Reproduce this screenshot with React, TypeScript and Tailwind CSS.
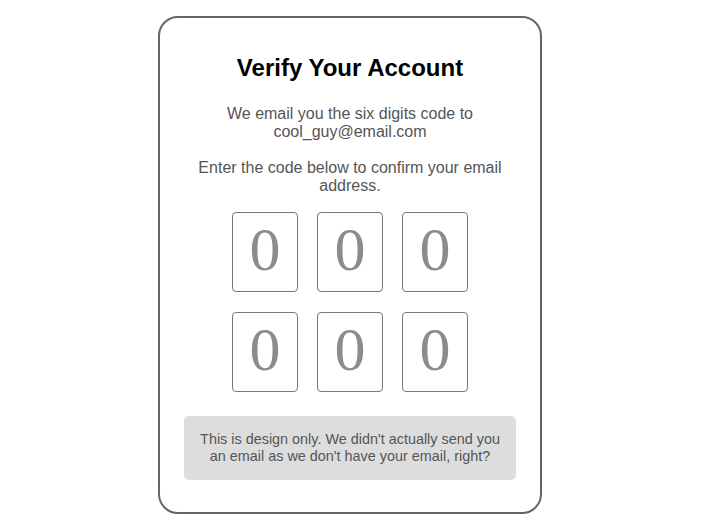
import React from 'react';

const digits = ['0', '0', '0', '0', '0', '0'];

export default function App() {
  return (
    <div className="min-h-screen bg-white flex justify-center pt-4 pr-px font-['Liberation_Sans',Arial,sans-serif]">
      <div className="w-[384px] h-[498px] border-2 border-[#666] rounded-[20px] px-6 pt-[36px] text-center">
        <h1 className="text-[24px] leading-[28px] font-bold text-black">Verify Your Account</h1>

        <p className="mt-[23px] text-[16px] leading-[18px] text-[#555]">
          We email you the six digits code to
          <br />
          cool_guy@email.com
        </p>
        <p className="mt-[18px] text-[16px] leading-[18px] text-[#555]">
          Enter the code below to confirm your email address.
        </p>

        {/* Code inputs */}
        <div className="mt-[17px] grid grid-cols-[66px_66px_66px] justify-center gap-x-[19px] gap-y-5">
          {digits.map((d, i) => (
            <div
              key={i}
              className="h-[80px] border border-[#777] rounded-[4px] flex items-center justify-center pb-[7px] font-['Liberation_Serif','Times_New_Roman',serif] text-[62px] leading-none text-[#8c8c8c]"
            >
              {d}
            </div>
          ))}
        </div>

        <div className="mt-6 bg-[#ddd] rounded-[5px] px-3 py-[15px] text-[14.4px] leading-[17px] text-[#555]">
          This is design only. We didn't actually send you an email as we don't have your email, right?
        </div>
      </div>
    </div>
  );
}
